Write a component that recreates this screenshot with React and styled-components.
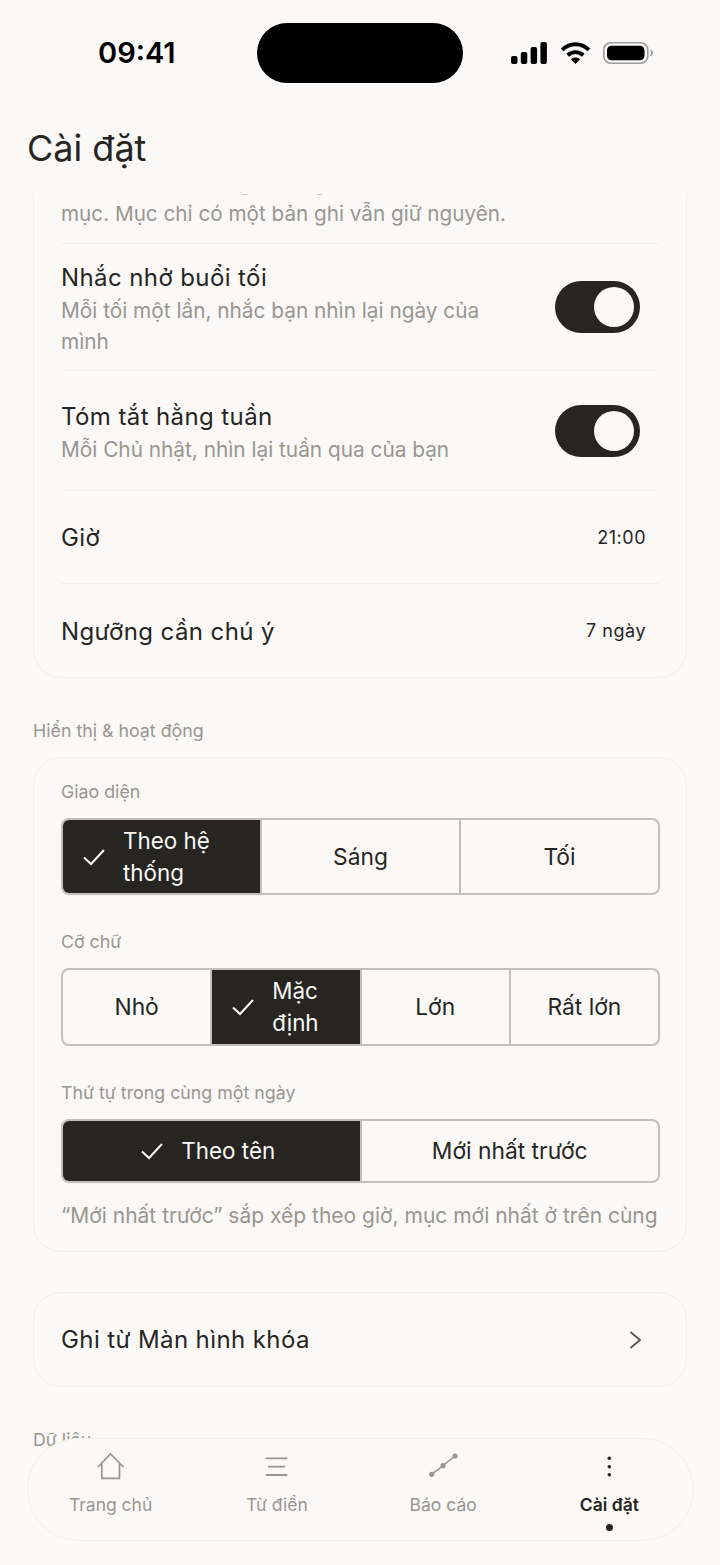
import React from 'react';
import styled, { createGlobalStyle } from 'styled-components';

const GlobalStyle = createGlobalStyle`
  html, body {
    margin: 0;
    padding: 0;
    background: #FAF9F7;
  }
  * { box-sizing: border-box; }
`;

const Screen = styled.div`
  position: relative;
  width: 720px;
  height: 1565px;
  overflow: hidden;
  display: flex;
  flex-direction: column;
  background: #FAF9F7;
  color: #262522;
  font-family: Inter, "Noto Sans", sans-serif;
`;

const StatusBar = styled.div`
  height: 105px;
  flex: none;
  display: flex;
  align-items: flex-start;
  padding-top: 23px;
`;

const Clock = styled.div`
  width: 257px;
  padding-left: 98px;
  height: 60px;
  line-height: 60px;
  font-size: 29px;
  font-weight: 600;
  color: #000;
`;

const Island = styled.div`
  width: 206px;
  height: 60px;
  border-radius: 30px;
  background: #000;
`;

const StatusIcons = styled.div`
  display: flex;
  align-items: center;
  height: 60px;
  margin-left: 48px;
  gap: 12.5px;
`;

const Header = styled.h1`
  flex: none;
  height: 89px;
  margin: 0;
  padding: 21px 0 0 27px;
  font-size: 36px;
  line-height: 44px;
  font-weight: 400;
  color: #262522;
`;

const Scroll = styled.div`
  flex: 1;
  overflow: hidden;
  padding: 0 33px;
`;

const Card = styled.section`
  border: 1.5px solid #F1EFEB;
  border-radius: 28px;
  padding: ${p => p.$padding || '0 27px'};
  margin-top: ${p => p.$top || 0}px;
`;

const Row = styled.div`
  display: flex;
  align-items: center;
  justify-content: space-between;
  height: ${p => p.$height}px;
  border-bottom: ${p => (p.$last ? 'none' : '1.5px solid #F1EFEB')};
`;

const RowText = styled.div`
  width: 444px;
  padding-top: 5px;
`;

const RowTitle = styled.div`
  font-size: 24px;
  line-height: 32px;
  letter-spacing: 0.4px;
`;

const SingleTitle = styled(RowTitle)`
  margin-top: 2px;
`;

const RowSub = styled.div`
  font-size: 20.8px;
  line-height: 31px;
  margin-top: 1.5px;
  color: #98968F;
`;

const Clipped = styled.div`
  padding: 21px 0 14px;
  font-size: 20.7px;
  line-height: 31px;
  color: #98968F;
  border-bottom: 1.5px solid #F1EFEB;
`;

const RowValue = styled.div`
  font-size: 18px;
  letter-spacing: 0.5px;
  margin-right: 13px;
`;

const Toggle = styled.div`
  width: 85px;
  height: 52px;
  flex: none;
  margin-right: 19px;
  border-radius: 26px;
  background: #262522;
  display: flex;
  align-items: center;
  justify-content: flex-end;
  padding-right: 6px;
`;

const Knob = styled.div`
  width: 40px;
  height: 40px;
  border-radius: 50%;
  background: #FAF9F7;
`;

const SectionLabel = styled.div`
  font-size: 17.8px;
  line-height: 24px;
  color: #98968F;
  margin-top: ${p => p.$top}px;
`;

const FieldLabel = styled.div`
  font-size: 17.8px;
  line-height: 24px;
  color: #98968F;
  margin-top: ${p => p.$top}px;
  margin-bottom: 14px;
`;

const Segment = styled.div`
  display: flex;
  width: 599px;
  height: ${p => p.$height}px;
  border: 2px solid #C2C0BB;
  border-radius: 8px;
  overflow: hidden;
`;

const Option = styled.div`
  flex: 1 1 0;
  min-width: 0;
  display: flex;
  align-items: center;
  justify-content: center;
  gap: 16px;
  padding: 0 18px;
  font-size: ${p => (p.$active ? '22.4px' : '22.8px')};
  line-height: 32px;
  text-align: ${p => (p.$active ? 'left' : 'center')};
  background: ${p => (p.$active ? '#262522' : 'transparent')};
  color: ${p => (p.$active ? '#FAF9F7' : '#262522')};
  & + & { border-left: 2px solid #C2C0BB; }
`;

const OptionLabel = styled.span`
  min-width: 0;
  margin-right: ${p => (p.$active ? '8px' : '0')};
`;

const Note = styled.div`
  font-size: 21px;
  line-height: 32px;
  color: #98968F;
  margin-top: 17px;
  white-space: nowrap;
`;

const LinkRow = styled.div`
  height: 93px;
  display: flex;
  align-items: center;
  justify-content: space-between;
  font-size: 24px;
  letter-spacing: 0.4px;
  padding-right: 12px;
`;

const BottomNav = styled.nav`
  position: absolute;
  left: 26.5px;
  top: 1438px;
  width: 667px;
  height: 103px;
  display: flex;
  border: 1.5px solid #F1EFEB;
  border-radius: 52px;
  background: #FAF9F7;
`;

const NavItem = styled.div`
  position: relative;
  flex: 1 1 0;
  display: flex;
  flex-direction: column;
  align-items: center;
  padding-top: 12.5px;
  color: ${p => (p.$active ? '#262522' : '#98968F')};
`;

const NavLabel = styled.div`
  font-size: 17.5px;
  line-height: 24px;
  margin-top: 9px;
  font-weight: ${p => (p.$active ? 600 : 400)};
`;

const NavDot = styled.div`
  position: absolute;
  bottom: 9px;
  width: 7px;
  height: 7px;
  border-radius: 50%;
  background: #262522;
`;

const IconBox = styled.svg`
  width: 32px;
  height: 32px;
  display: block;
`;

const Check = () => (
  <svg width="26" height="26" viewBox="0 0 26 26" fill="none" stroke="currentColor" strokeWidth="2" style={{ flex: 'none' }}>
    <path d="M3 13.5 L10 20 L23 6" />
  </svg>
);

const Chevron = () => (
  <svg width="24" height="24" viewBox="0 0 24 24" fill="none" stroke="#555450" strokeWidth="1.8">
    <path d="M7.5 4 L17 12 L7.5 20" />
  </svg>
);

const Signal = () => (
  <svg width="36" height="22" viewBox="0 0 36 22" fill="#000">
    <rect x="0" y="14" width="6.5" height="8" rx="2" />
    <rect x="9.8" y="10" width="6.5" height="12" rx="2" />
    <rect x="19.6" y="5" width="6.5" height="17" rx="2" />
    <rect x="29.4" y="0" width="6.5" height="22" rx="2" />
  </svg>
);

const Wifi = () => (
  <svg width="31" height="22" viewBox="0 0 33 24" fill="none" stroke="#000" strokeWidth="4.2">
    <path d="M2 8.5 C10.5 0.5 22.5 0.5 31 8.5" />
    <path d="M8 14.5 C13 10 20 10 25 14.5" />
    <path d="M16.5 24 L11.5 18.8 C14.5 16.2 18.5 16.2 21.5 18.8 Z" fill="#000" stroke="none" />
  </svg>
);

const Battery = () => (
  <svg width="50" height="22" viewBox="0 0 50 22" fill="none">
    <rect x="0.8" y="0.8" width="44" height="20.4" rx="7" stroke="#9c9c9c" strokeWidth="1.6" />
    <rect x="4" y="3.8" width="37.5" height="14.4" rx="4.5" fill="#000" />
    <path d="M47.5 8 C49.5 9 49.5 13 47.5 14" stroke="#9c9c9c" strokeWidth="1.8" />
  </svg>
);

const HomeIcon = () => (
  <IconBox viewBox="0 0 32 32" fill="none" stroke="currentColor" strokeWidth="1.7">
    <path d="M3 15 L15.5 2 L28.5 15" />
    <path d="M6.8 11.5 V26.3 H24.5 V11.5" />
  </IconBox>
);

const ListIcon = () => (
  <IconBox viewBox="0 0 32 32" fill="none" stroke="currentColor" strokeWidth="1.8">
    <path d="M5 6.3 H26.3 M7 14.7 H24.3 M5 23 H26.3" />
  </IconBox>
);

const TrendIcon = () => (
  <IconBox viewBox="0 0 32 32" fill="currentColor" stroke="currentColor" strokeWidth="1.6">
    <path d="M4.7 22.3 L16 13.7 L28 4" fill="none" />
    <circle cx="4.7" cy="22.3" r="2.6" stroke="none" />
    <circle cx="16" cy="13.7" r="2.6" stroke="none" />
    <circle cx="28" cy="4" r="2.6" stroke="none" />
  </IconBox>
);

const MoreIcon = () => (
  <IconBox viewBox="0 0 32 32" fill="currentColor">
    <circle cx="16.3" cy="6.3" r="1.8" />
    <circle cx="16.3" cy="14.7" r="1.8" />
    <circle cx="16.3" cy="22.7" r="1.8" />
  </IconBox>
);

const SegmentControl = ({ height, options, active }) => (
  <Segment $height={height}>
    {options.map(o => (
      <Option key={o} $active={o === active}>
        {o === active && <Check />}
        <OptionLabel $active={o === active}>{o}</OptionLabel>
      </Option>
    ))}
  </Segment>
);

export default function App() {
  return (
    <>
      <GlobalStyle />
      <Screen>
        <StatusBar>
          <Clock>09:41</Clock>
          <Island />
          <StatusIcons>
            <Signal />
            <Wifi />
            <Battery />
          </StatusIcons>
        </StatusBar>
        <Header>Cài đặt</Header>
        <Scroll>
          <Card $top={-49}>
            <Clipped>
              Nếu cần, các bản ghi trùng tên sẽ nối lại theo<br />
              mục. Mục chỉ có một bản ghi vẫn giữ nguyên.
            </Clipped>
            <Row $height={127}>
              <RowText>
                <RowTitle>Nhắc nhở buổi tối</RowTitle>
                <RowSub>Mỗi tối một lần, nhắc bạn nhìn lại ngày của mình</RowSub>
              </RowText>
              <Toggle><Knob /></Toggle>
            </Row>
            <Row $height={120}>
              <RowText>
                <RowTitle>Tóm tắt hằng tuần</RowTitle>
                <RowSub>Mỗi Chủ nhật, nhìn lại tuần qua của bạn</RowSub>
              </RowText>
              <Toggle><Knob /></Toggle>
            </Row>
            <Row $height={93}>
              <SingleTitle>Giờ</SingleTitle>
              <RowValue>21:00</RowValue>
            </Row>
            <Row $height={93} $last>
              <SingleTitle>Ngưỡng cần chú ý</SingleTitle>
              <RowValue>7 ngày</RowValue>
            </Row>
          </Card>

          <SectionLabel $top={41}>Hiển thị &amp; hoạt động</SectionLabel>
          <Card $top={14} $padding="0 27px 19px">
            <FieldLabel $top={22}>Giao diện</FieldLabel>
            <SegmentControl height={77} options={['Theo hệ thống', 'Sáng', 'Tối']} active="Theo hệ thống" />
            <FieldLabel $top={35}>Cỡ chữ</FieldLabel>
            <SegmentControl height={78} options={['Nhỏ', 'Mặc định', 'Lớn', 'Rất lớn']} active="Mặc định" />
            <FieldLabel $top={35}>Thứ tự trong cùng một ngày</FieldLabel>
            <SegmentControl height={64} options={['Theo tên', 'Mới nhất trước']} active="Theo tên" />
            <Note>“Mới nhất trước” sắp xếp theo giờ, mục mới nhất ở trên cùng</Note>
          </Card>

          <Card $top={40}>
            <LinkRow>
              <span>Ghi từ Màn hình khóa</span>
              <Chevron />
            </LinkRow>
          </Card>

          <SectionLabel $top={41}>Dữ liệu</SectionLabel>
        </Scroll>

        <BottomNav>
          <NavItem>
            <HomeIcon />
            <NavLabel>Trang chủ</NavLabel>
          </NavItem>
          <NavItem>
            <ListIcon />
            <NavLabel>Từ điển</NavLabel>
          </NavItem>
          <NavItem>
            <TrendIcon />
            <NavLabel>Báo cáo</NavLabel>
          </NavItem>
          <NavItem $active>
            <MoreIcon />
            <NavLabel $active>Cài đặt</NavLabel>
            <NavDot />
          </NavItem>
        </BottomNav>
      </Screen>
    </>
  );
}
